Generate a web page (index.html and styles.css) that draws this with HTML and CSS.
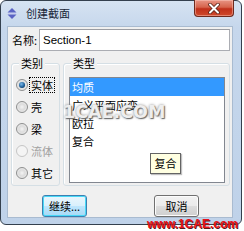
FILE: index.html
```html
<!DOCTYPE html>
<html lang="zh-CN">
<head>
<meta charset="utf-8">
<title>创建截面</title>
<link rel="stylesheet" href="styles.css">
</head>
<body>
<div class="window">
  <div class="titlebar">
    <svg class="app-icon" width="10" height="11" viewBox="0 0 10 11">
      <path d="M5 0 L9.5 4.5 L0.5 4.5 Z" fill="#5a63c4"/>
      <path d="M0.5 6.5 L9.5 6.5 L5 11 Z" fill="#5a63c4"/>
      <rect x="1" y="5" width="8" height="1" fill="#c8ccf0"/>
    </svg>
    <span class="title">创建截面</span>
    <div class="close">
      <svg width="14" height="11" viewBox="0 0 14 11">
        <path d="M3 1.5 L11 9.5 M11 1.5 L3 9.5" stroke="#5a2418" stroke-width="3.6" stroke-linecap="round"/>
        <path d="M3 1.5 L11 9.5 M11 1.5 L3 9.5" stroke="#ffffff" stroke-width="2" stroke-linecap="round"/>
      </svg>
    </div>
  </div>
  <div class="client">
    <div class="name-row">
      <span class="name-label">名称:</span>
      <div class="input">Section-1</div>
    </div>
    <div class="groups">
      <div class="group group-cat">
        <span class="group-title">类别</span>
        <div class="radios">
          <div class="radio-row"><span class="radio checked"></span><span class="radio-label focus">实体</span></div>
          <div class="radio-row"><span class="radio"></span><span class="radio-label">壳</span></div>
          <div class="radio-row"><span class="radio"></span><span class="radio-label">梁</span></div>
          <div class="radio-row disabled"><span class="radio"></span><span class="radio-label">流体</span></div>
          <div class="radio-row"><span class="radio"></span><span class="radio-label">其它</span></div>
        </div>
      </div>
      <div class="group group-type">
        <span class="group-title">类型</span>
        <div class="listbox">
          <div class="item selected">均质</div>
          <div class="item">广义平面应变</div>
          <div class="item">欧拉</div>
          <div class="item">复合</div>
        </div>
      </div>
    </div>
    <div class="buttons">
      <div class="btn default">继续...</div>
      <div class="btn">取消</div>
    </div>
  </div>
</div>
<div class="tooltip">复合</div>
<div class="wm-center">1CAE.COM</div>
<div class="wm-bottom">www.1CAE.com</div>
</body>
</html>
```
FILE: styles.css
```css
html, body {
  margin: 0;
  padding: 0;
}
body {
  width: 244px;
  height: 231px;
  background: #ffffff;
  position: relative;
  overflow: hidden;
  font-family: "Noto Sans CJK SC", "Liberation Sans", sans-serif;
  font-size: 11px;
  color: #000;
}
.window {
  width: 242px;
  height: 225px;
  box-sizing: border-box;
  border: 1px solid #34404e;
  border-radius: 6px;
  background: linear-gradient(180deg, #d6e3f2 0px, #c6d7ec 26px, #bfd2e9 100%);
  display: flex;
  flex-direction: column;
}
.titlebar {
  height: 25px;
  display: flex;
  align-items: flex-start;
}
.app-icon {
  margin-left: 6px;
  margin-top: 7px;
}
.title {
  margin-left: 9px;
  margin-top: 5px;
  line-height: 14px;
  color: #1a2638;
}
.close {
  margin-left: auto;
  margin-right: 7px;
  margin-top: -1px;
  width: 40px;
  height: 17px;
  box-sizing: border-box;
  border: 1px solid #6e2a1e;
  border-top: none;
  border-radius: 0 0 4px 4px;
  background: linear-gradient(180deg, #e89484 0%, #d6644c 45%, #c0301a 55%, #cf4a2c 100%);
  display: flex;
  align-items: center;
  justify-content: center;
  box-shadow: inset 0 0 0 1px rgba(255,210,200,0.45);
}
.client {
  margin-left: 6px;
  width: 226px;
  height: 192px;
  box-sizing: border-box;
  border: 1px solid #a9bbd0;
  background: #f0f0f0;
  display: flex;
  flex-direction: column;
}
.name-row {
  display: flex;
  align-items: center;
  margin-top: 2px;
  padding-left: 4px;
}
.name-label {
  width: 27px;
  line-height: 14px;
}
.input {
  width: 191px;
  height: 22px;
  box-sizing: border-box;
  border: 1px solid #abadb3;
  border-top-color: #9a9ca2;
  background: #fff;
  font-family: "Liberation Sans", sans-serif;
  font-size: 11.5px;
  line-height: 20px;
  padding-left: 3px;
}
.groups {
  display: flex;
  gap: 3px;
  margin-top: 12px;
  padding-left: 3px;
}
.group {
  height: 123px;
  box-sizing: border-box;
  border: 1px solid #d5dfe5;
  border-radius: 3px;
  box-shadow: inset 1px 1px 0 #ffffff;
  display: flex;
  flex-direction: column;
  align-items: flex-start;
}
.group-cat { width: 49px; }
.group-type { width: 167px; }
.group-title {
  margin-top: -8px;
  margin-left: 7px;
  padding: 0 2px;
  background: #f0f0f0;
  line-height: 14px;
}
.radios {
  margin-top: 4px;
  display: flex;
  flex-direction: column;
}
.radio-row {
  height: 22px;
  display: flex;
  align-items: center;
  padding-left: 4px;
}
.radio {
  width: 12px;
  height: 12px;
  box-sizing: border-box;
  border-radius: 50%;
  border: 1px solid #8e8f8f;
  background: radial-gradient(circle at 50% 50%, #f4f4f4 0, #dcdcdc 3px, #e8e8e8 5px);
  display: flex;
  align-items: center;
  justify-content: center;
}
.radio.checked::after {
  content: "";
  width: 6px;
  height: 6px;
  border-radius: 50%;
  background: radial-gradient(circle at 40% 35%, #7ab8e8 0, #1d5f9a 3px, #0e3e6c 4px);
}
.radio-label {
  margin-left: 3px;
  line-height: 14px;
}
.radio-label.focus {
  margin-left: 2px;
  padding: 0 1px;
  outline: 1px dotted #000;
}
.disabled .radio {
  border-color: #c5c5c5;
  background: #f4f4f4;
}
.disabled .radio-label {
  color: #a0a0a0;
}
.listbox {
  margin-top: 7px;
  margin-left: 5px;
  width: 156px;
  height: 106px;
  box-sizing: border-box;
  border: 1px solid #828790;
  background: #ffffff;
}
.item {
  height: 18px;
  line-height: 18px;
  padding-left: 2px;
}
.item.selected {
  background: #3399ff;
  color: #fff;
}
.buttons {
  display: flex;
  gap: 67px;
  margin-top: 9px;
  padding-left: 34px;
}
.btn {
  width: 45px;
  height: 22px;
  box-sizing: border-box;
  border: 1px solid #707070;
  border-radius: 3px;
  background: linear-gradient(180deg, #f2f2f2 0%, #ebebeb 50%, #dddddd 51%, #cfcfcf 100%);
  box-shadow: inset 0 0 0 1px #fcfcfc;
  text-align: center;
  line-height: 20px;
}
.btn.default {
  border-color: #3c7fb1;
  background: linear-gradient(180deg, #eaf6fd 0%, #d9f0fc 50%, #bee6fd 51%, #a7d9f5 100%);
  box-shadow: inset 0 0 0 1px #48d9f7;
}
.tooltip {
  position: absolute;
  left: 150px;
  top: 153px;
  width: 31px;
  height: 21px;
  box-sizing: border-box;
  border: 1px solid #646464;
  background: #ffffe1;
  text-align: center;
  line-height: 19px;
  box-shadow: 1px 1px 1px rgba(0,0,0,0.25);
}
.wm-center {
  position: absolute;
  left: 63px;
  top: 101px;
  font-family: "DejaVu Sans", sans-serif;
  font-weight: bold;
  font-size: 17.5px;
  line-height: 22px;
  color: #eeeeee;
  text-shadow: 1px 1px 1px #6a6a6a, 0 0 3px #8a8a8a;
}
.wm-bottom {
  position: absolute;
  left: 147px;
  top: 217px;
  font-family: "Liberation Sans", sans-serif;
  font-weight: bold;
  font-size: 12px;
  line-height: 14px;
  color: #e8121a;
  text-shadow: 1px 1px 0 #5a1a1a;
}
```
